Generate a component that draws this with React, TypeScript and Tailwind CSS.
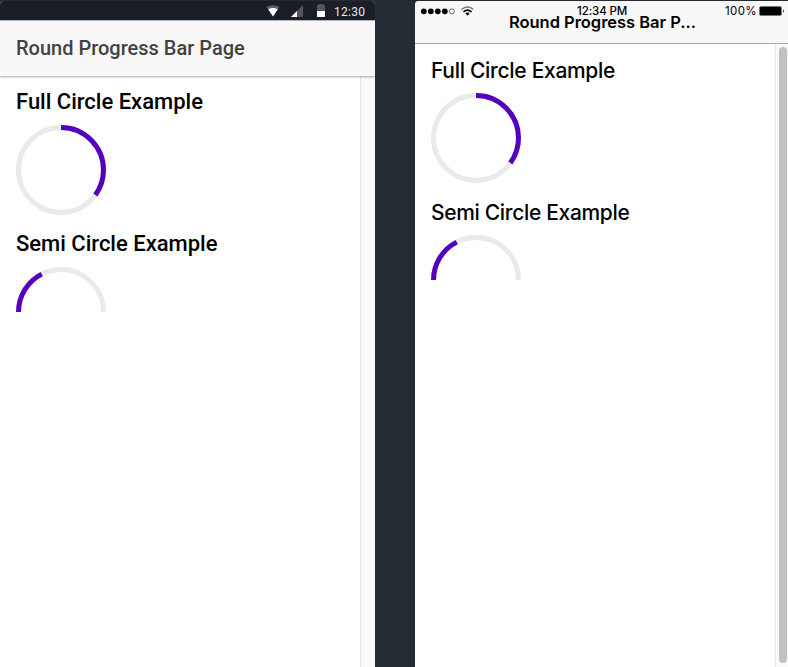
const ACCENT = "#5500bd";
const TRACK = "#eaeaea";

function RoundProgress({ value, semi = false }: { value: number; semi?: boolean }) {
  const r = 42.5;
  const arc = semi
    ? `M2.5 45A${r} ${r} 0 0 1 87.5 45`
    : `M45 2.5A${r} ${r} 0 0 1 45 87.5A${r} ${r} 0 0 1 45 2.5`;
  return (
    <svg className="block" width="90" height={semi ? 45 : 90} fill="none" strokeWidth="5">
      <path d={arc} stroke={TRACK} />
      <path d={arc} stroke={ACCENT} pathLength={100} strokeDasharray={`${value} 200`} />
    </svg>
  );
}

function AndroidStatusBar() {
  return (
    <div className="flex h-[19px] shrink-0 items-start bg-[#1a1e26] text-white">
      <svg width="334" height="19" className="block shrink-0" viewBox="0 1 334 19">
        <path d="M266.5 7Q273 3.4 279.5 7L273 16.5Z" fill="#5c6067" />
        <path d="M268.2 9.2Q273 6.7 277.8 9.2L273 16.5Z" fill="#fff" />
        <path d="M303 5V17H291Z" fill="#50545b" />
        <path d="M297 11V17H291Z" fill="#fff" />
        <path d="M317 5H319V4H323V5H325V11H317Z" fill="#50545b" />
        <path d="M317 11H325V17H317Z" fill="#fff" />
      </svg>
      <span className="mt-[3px] whitespace-nowrap text-[12px] leading-4 tracking-[0.25px] text-[#e8e9ea]">12:30</span>
    </div>
  );
}

function AndroidPhone() {
  return (
    <div className="flex h-full w-[375px] shrink-0 flex-col overflow-hidden rounded-t-[4px] bg-white font-['Roboto',sans-serif]">
      <AndroidStatusBar />
      <header className="z-10 flex h-14 shrink-0 items-center border-t border-[#b5b5b5] bg-[#f8f8f8] pb-0.5 pl-4 shadow-[0_1px_2px_rgba(0,0,0,0.35)]">
        <h1 className="text-[20px] font-medium leading-6 text-[#424242]">Round Progress Bar Page</h1>
      </header>
      <div className="flex flex-1">
        <main className="flex-1 pl-4 pt-3">
          <h2 className="mb-2.5 h-[27px] text-[22px] font-medium leading-[27px] text-black">Full Circle Example</h2>
          <RoundProgress value={35} />
          <h2 className="mb-2.5 mt-[15px] h-[27px] text-[22px] font-medium leading-[27px] text-black">Semi Circle Example</h2>
          <RoundProgress value={35} semi />
        </main>
        <div className="w-[15px] border-l border-[#e7e7e7] bg-[#fafafa]" />
      </div>
    </div>
  );
}

function IosPhone() {
  return (
    <div className="flex h-full w-[373px] shrink-0 flex-col overflow-hidden rounded-tl-[4px] bg-white font-['Inter',sans-serif] text-black">
      <header className="h-[43px] shrink-0 border-b border-[#a9a9a9] bg-[#f8f8f8]">
        <div className="flex h-[14px] items-start pt-[2px]">
          <svg className="block shrink-0" width="162" height="14">
            <g fill="#000">
              <circle cx="8.8" cy="8.3" r="2.9" />
              <circle cx="15.8" cy="8.3" r="2.9" />
              <circle cx="22.8" cy="8.3" r="2.9" />
              <circle cx="29.8" cy="8.3" r="2.9" />
            </g>
            <circle cx="36.8" cy="8.3" r="2.5" fill="none" stroke="#333" strokeWidth=".7" />
            <g fill="none" stroke="#000" strokeWidth="1.5">
              <path d="M46.5 6.5Q52.5 1.7 58.5 6.5" stroke="#777" />
              <path d="M48.4 8.8Q52.5 5.4 56.6 8.8" />
            </g>
            <path d="M50.3 10.4Q52.5 8.7 54.7 10.4L52.5 12.5Z" />
          </svg>
          <span className="w-[148px] whitespace-nowrap text-[11.5px] font-medium leading-4 tracking-[-0.1px]">12:34 PM</span>
          <span className="w-[34px] whitespace-nowrap text-[11.5px] leading-4 tracking-[0.35px]">100%</span>
          <svg className="block shrink-0" width="26" height="14">
            <rect x=".5" y="3.5" width="22" height="9" rx="1.5" fill="#000" stroke="#777" />
            <path d="M24 6Q25.8 8 24 10Z" />
          </svg>
        </div>
        <h1 className="-mt-[3px] pl-[94px] text-[16.5px] font-semibold leading-5 tracking-[-0.03px]">Round Progress Bar P...</h1>
      </header>
      <div className="flex flex-1">
        <main className="flex-1 pl-4 pt-3">
          <h2 className="mb-2.5 h-[27px] whitespace-nowrap text-[21px] font-medium leading-[29px] tracking-[-0.3px]">Full Circle Example</h2>
          <RoundProgress value={35} />
          <h2 className="mb-2.5 mt-[15px] h-[27px] whitespace-nowrap text-[21px] font-medium leading-[29px] tracking-[-0.33px]">Semi Circle Example</h2>
          <RoundProgress value={35} semi />
        </main>
        <div className="flex w-[13px] border-l border-[#e7e7e7] bg-[#fafafa] pb-1 pl-[3px] pt-[3px]">
          <div className="w-2 rounded-full bg-[#c1c1c1]" />
        </div>
      </div>
    </div>
  );
}

export default function App() {
  return (
    <div className="flex h-[667px] w-[788px] gap-10 overflow-hidden border-t border-[#242933] bg-[#242c34]">
      <AndroidPhone />
      <IosPhone />
    </div>
  );
}
